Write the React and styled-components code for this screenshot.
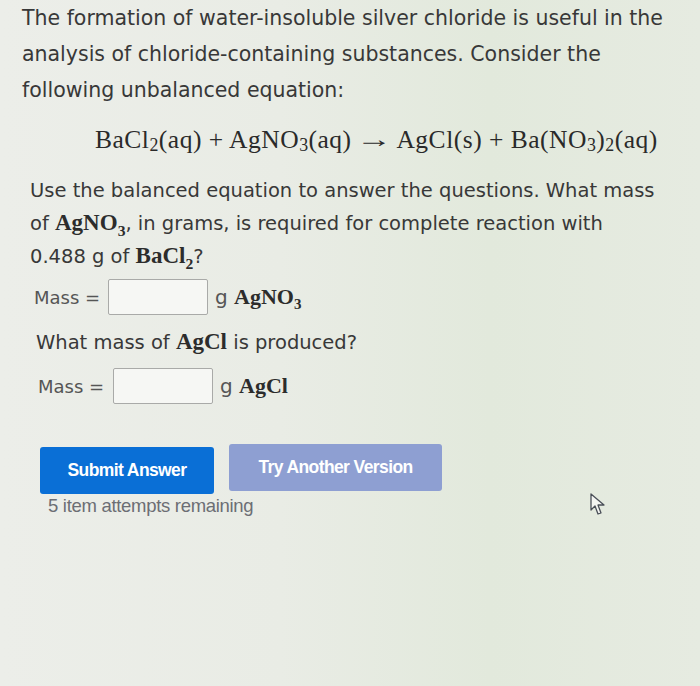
import React from "react";
import styled, { createGlobalStyle } from "styled-components";

const GlobalStyle = createGlobalStyle`
  html, body {
    margin: 0;
    padding: 0;
    background: #e9ebe4;
  }
`;

const Page = styled.div`
  width: 700px;
  height: 686px;
  box-sizing: border-box;
  padding: 0 0 0 22px;
  background: linear-gradient(90deg, #eceee9 0%, #e9ece5 40%, #e2e9dc 70%, #e6ebe1 100%);
  font-family: "DejaVu Sans", Verdana, sans-serif;
  color: #383838;
  position: relative;
  overflow: hidden;
`;

const Para = styled.p`
  margin: ${(p) => p.margin || "0"};
  font-size: ${(p) => p.size || 19.5}px;
  line-height: ${(p) => p.lh || 33}px;
  padding-left: ${(p) => p.indent || 0}px;
`;

const Chem = styled.span`
  font-family: "Liberation Serif", "Times New Roman", serif;
  font-size: ${(p) => p.size || 23}px;
  font-weight: 600;
  line-height: 0;
  color: #2c2c2c;
  sub {
    font-size: 0.68em;
    line-height: 0;
  }
`;

const Equation = styled.div`
  font-family: "Liberation Serif", "Times New Roman", serif;
  font-size: 25.5px;
  line-height: 30px;
  color: #2a2a2a;
  margin: 16px 0 19px 73px;
  letter-spacing: 0.5px;
  white-space: nowrap;
  sub {
    font-size: 0.7em;
    vertical-align: -0.15em;
    line-height: 0;
  }
`;

const Arrow = styled.span`
  display: inline-block;
  font-size: 24px;
  margin: 0 4px;
  transform: scaleX(1.5);
  vertical-align: 1px;
`;

const Row = styled.div`
  display: flex;
  align-items: center;
  gap: 7px;
  padding-left: ${(p) => p.indent || 0}px;
  margin: ${(p) => p.margin || "0"};
  font-size: 18px;
`;

const Label = styled.span`
  color: #555;
  width: ${(p) => p.w}px;
`;

const Field = styled.input`
  width: 100px;
  height: 36px;
  box-sizing: border-box;
  border: 1.5px solid #a9aaa8;
  border-radius: 2px;
  background: #f6f7f4;
  outline: none;
`;

const Unit = styled.span`
  color: #555;
  font-size: 20px;
`;

const Buttons = styled.div`
  display: flex;
  align-items: center;
  gap: 15px;
  margin: 43px 0 0 18px;
`;

const Button = styled.button`
  border: none;
  border-radius: 3px;
  color: #fff;
  font-family: "Liberation Sans", Arial, sans-serif;
  font-weight: 700;
  font-size: 17.5px;
  letter-spacing: -0.6px;
  background: ${(p) => (p.secondary ? "#8e9fd2" : "#0a6fd6")};
  width: ${(p) => p.w}px;
  height: 47px;
  margin-top: ${(p) => (p.secondary ? "-6px" : "0")};
`;

const Attempts = styled.div`
  font-family: "Liberation Sans", Arial, sans-serif;
  font-size: 18.5px;
  color: #6c6e74;
  letter-spacing: -0.3px;
  margin: 1px 0 0 26px;
`;

const Cursor = styled.svg`
  position: absolute;
  left: 590px;
  top: 493px;
`;

export default function App() {
  return (
    <>
      <GlobalStyle />
      <Page>
        <Para size={20.5} lh={36}>The formation of water-insoluble silver chloride is useful in the</Para>
        <Para size={20.5} lh={36}>analysis of chloride-containing substances. Consider the</Para>
        <Para size={20.5} lh={36}>following unbalanced equation:</Para>
        <Equation>
          BaCl<sub>2</sub>(aq) + AgNO<sub>3</sub>(aq) <Arrow>→</Arrow> AgCl(s) + Ba(NO<sub>3</sub>)<sub>2</sub>(aq)
        </Equation>
        <Para indent={8}>Use the balanced equation to answer the questions. What mass</Para>
        <Para indent={8}>
          of <Chem>AgNO<sub>3</sub></Chem>, in grams, is required for complete reaction with
        </Para>
        <Para indent={8}>
          0.488 g of <Chem>BaCl<sub>2</sub></Chem>?
        </Para>
        <Row indent={12} margin="6px 0 0 0">
          <Label w={67}>Mass =</Label>
          <Field />
          <Unit>
            g <Chem size={22}>AgNO<sub>3</sub></Chem>
          </Unit>
        </Row>
        <Para indent={14} margin="11px 0 0 0">
          What mass of <Chem>AgCl</Chem> is produced?
        </Para>
        <Row indent={16} margin="9px 0 0 0">
          <Label w={68}>Mass =</Label>
          <Field />
          <Unit>
            g <Chem size={22}>AgCl</Chem>
          </Unit>
        </Row>
        <Buttons>
          <Button w={174}>Submit Answer</Button>
          <Button secondary w={213}>Try Another Version</Button>
        </Buttons>
        <Attempts>5 item attempts remaining</Attempts>
        <Cursor width="16" height="24" viewBox="0 0 16 24">
          <path d="M1 1 L1 17 L5 13 L8 21 L11 20 L8 12 L14 12 Z" fill="#f4f5f2" stroke="#4a4f58" strokeWidth="1.3" strokeLinejoin="round" />
        </Cursor>
      </Page>
    </>
  );
}
